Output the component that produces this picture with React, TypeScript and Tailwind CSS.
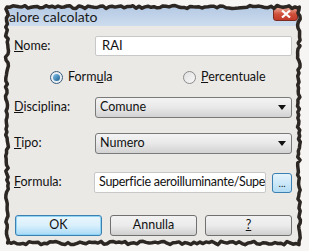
import React from 'react';

// deterministic jagged outline for the torn-paper frame
function tornPath(x0: number, y0: number, x1: number, y1: number) {
  let seed = 7;
  const rnd = () => {
    seed = (seed * 9301 + 49297) % 233280;
    return seed / 233280 - 0.5;
  };
  const pts: [number, number][] = [];
  for (let x = x0; x < x1; x += 3) pts.push([x, y0 + rnd() * 3]);
  for (let y = y0; y < y1; y += 3) pts.push([x1 + rnd() * 3, y]);
  for (let x = x1; x > x0; x -= 3) pts.push([x, y1 + rnd() * 3.5]);
  for (let y = y1; y > y0; y -= 3) pts.push([x0 + rnd() * 3, y]);
  return 'M' + pts.map(p => p[0].toFixed(1) + ' ' + p[1].toFixed(1)).join(' L') + ' Z';
}

function Select({ value }: { value: string }) {
  return (
    <div className="flex-1 h-[21px] flex items-center justify-between pl-[4px] pr-[5px] rounded-[3px] border border-[#7a7a7a] bg-gradient-to-b from-[#f4f4f4] via-[#e8e8e8] to-[#d2d2d2]">
      <span>{value}</span>
      <svg width="8" height="5" viewBox="0 0 8 5"><path d="M0 0 H8 L4 5 Z" fill="#111" /></svg>
    </div>
  );
}

function Btn({ children, primary }: { children: React.ReactNode; primary?: boolean }) {
  return (
    <div
      className={
        primary
          ? 'w-[88px] h-[21px] flex items-center justify-center rounded-[3px] border border-[#3c7fb1] shadow-[inset_0_0_0_1px_#8fd3f5] bg-gradient-to-b from-[#eaf6fd] via-[#d9f0fc] to-[#a7d9f5]'
          : 'w-[88px] h-[21px] flex items-center justify-center rounded-[3px] border border-[#707070] bg-gradient-to-b from-[#f2f2f2] via-[#ebebeb] to-[#cfcfcf]'
      }
    >
      {children}
    </div>
  );
}

export default function App() {
  return (
    <div className="relative w-[309px] h-[251px] bg-[#f6f5f3] overflow-hidden" style={{ fontFamily: 'Lato, "Noto Sans", sans-serif' }}>
      <div className="absolute left-[7px] top-[7px] w-[292px] h-[236px] bg-[#ebe9e6] flex flex-col text-[12.5px] text-[#111]">
        {/* title bar */}
        <div className="relative h-[19px] bg-gradient-to-b from-[#b5cae4] to-[#cddcee] flex items-center">
          <span className="ml-[2px] text-[14px] leading-none text-[#1a1a1a]">alore calcolato</span>
          <div className="absolute right-[1px] top-[0px] w-[25px] h-[14px] rounded-b-[3px] border border-[#7a2c22] bg-gradient-to-b from-[#e8a595] via-[#d0503a] to-[#c13a28] flex items-center justify-center">
            <svg width="10" height="8" viewBox="0 0 10 8"><path d="M1 0.5 L9 7.5 M9 0.5 L1 7.5" stroke="#fff" strokeWidth="2.2" /></svg>
          </div>
        </div>

        <div className="flex flex-col px-[7px] pt-[10px]">
          <div className="flex items-center h-[20px]">
            <span className="w-[81px]"><u>N</u>ome:</span>
            <div className="flex-1 h-[20px] bg-white border border-[#c8c8c8] rounded-[2px] flex items-center pl-[6px] text-[13px]">RAI</div>
          </div>

          <div className="flex items-center h-[16px] mt-[13px]">
            <div className="ml-[36px] flex items-center gap-[5px] w-[133px]">
              <span className="w-[13px] h-[13px] rounded-full border border-[#3a5d7a] bg-[#e8eef4] flex items-center justify-center">
                <span className="w-[7px] h-[7px] rounded-full bg-gradient-to-br from-[#7fc4ee] to-[#1d5f8e]" />
              </span>
              <span>Form<u>u</u>la</span>
            </div>
            <div className="flex items-center gap-[5px]">
              <span className="w-[13px] h-[13px] rounded-full border border-[#8a8a8a] bg-gradient-to-br from-[#e0e0e0] to-[#f8f8f8]" />
              <span><u>P</u>ercentuale</span>
            </div>
          </div>

          <div className="flex items-center mt-[12px]">
            <span className="w-[81px]"><u>D</u>isciplina:</span>
            <Select value="Comune" />
          </div>

          <div className="flex items-center mt-[15px]">
            <span className="w-[81px]"><u>T</u>ipo:</span>
            <Select value="Numero" />
          </div>

          <div className="flex items-center mt-[18px]">
            <span className="w-[81px]"><u>F</u>ormula:</span>
            <div className="w-[174px] h-[21px] bg-white border border-[#c8c8c8] rounded-[2px] flex items-center pl-[4px] overflow-hidden whitespace-nowrap tracking-[-0.3px]">
              <span className="block max-w-[168px] overflow-hidden">Superficie aeroilluminante/Superfi</span>
            </div>
            <div className="ml-[6px] w-[20px] h-[20px] rounded-[3px] border border-[#3c7fb1] bg-gradient-to-b from-[#e5f4fc] to-[#b3dcf4] flex items-end justify-center pb-[4px] text-[10px] leading-none">...</div>
          </div>

          <div className="flex gap-[8px] mt-[22px] ml-[1px]">
            <Btn primary>OK</Btn>
            <Btn>Annulla</Btn>
            <Btn><u>?</u></Btn>
          </div>
        </div>
      </div>

      <svg className="absolute inset-0 pointer-events-none" width="309" height="251">
        <path d={tornPath(7, 7, 299, 243)} fill="none" stroke="#2d2723" strokeWidth="3.5" strokeLinejoin="round" />
      </svg>
    </div>
  );
}
